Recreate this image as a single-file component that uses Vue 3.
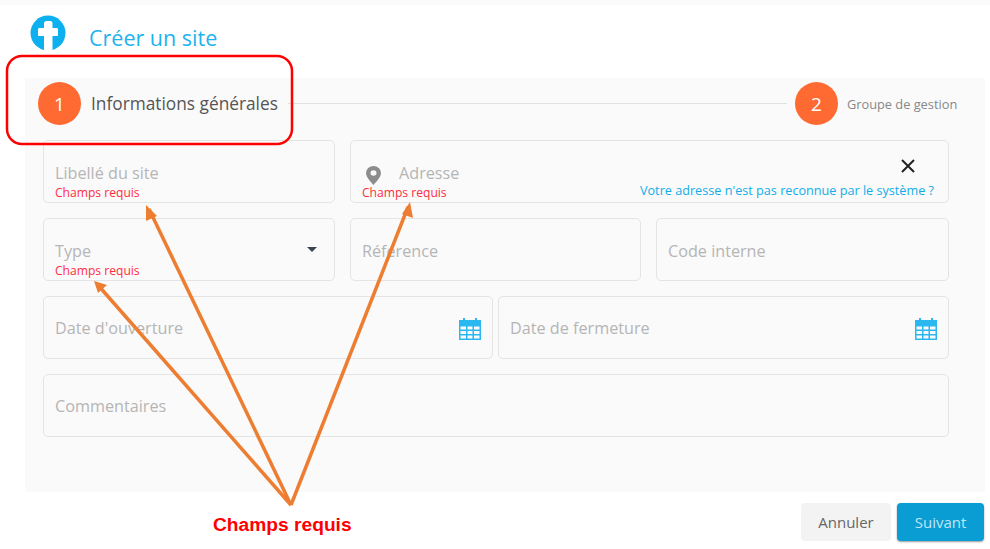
<template>
  <div class="page">
    <div class="top-strip"></div>
    <header class="head">
      <svg class="logo" viewBox="0 0 36 36" width="36" height="36">
        <circle cx="18" cy="18" r="17.500" fill="#0cb0ee" />
        <path d="M14 8.500c0-1.500 1-2.500 2.500-2.500h4c1.500 0 2 1 2 2.500V13h4c1 0 1.500.5 1.500 1.500v5c0 1-.5 1.500-1.500 1.500h-4v15H14V21H9.500c-1 0-1.500-.5-1.500-1.500v-5c0-1 .5-1.500 1.500-1.500H14z" fill="#fff" />
      </svg>
      <h1 class="title">Créer un site</h1>
    </header>

    <section class="panel">
      <div class="stepper">
        <span class="bullet">1</span>
        <span class="step-main">Informations générales</span>
        <span class="step-line"></span>
        <span class="bullet">2</span>
        <span class="step-next">Groupe de gestion</span>
      </div>

      <div class="form">
        <div class="row">
          <div class="field w-292">
            <span class="ph">Libellé du site</span>
            <span class="req">Champs requis</span>
          </div>
          <div class="field grow address">
            <svg class="pin" viewBox="0 0 16 22" width="15" height="19" preserveAspectRatio="none">
              <path fill-rule="evenodd" fill="#8c8c8c" d="M8 0a8 8 0 0 1 8 8c0 5-5 10-8 14C5 18 0 13 0 8a8 8 0 0 1 8-8zm0 5a3.200 3.200 0 1 0 0 6.400A3.200 3.200 0 0 0 8 5z" />
            </svg>
            <span class="ph addr-ph">Adresse</span>
            <span class="req">Champs requis</span>
            <svg class="close" viewBox="0 0 14 14" width="14" height="14">
              <path d="M1 1l12 12M13 1L1 13" stroke="#222" stroke-width="2" fill="none" />
            </svg>
            <a class="addr-link">Votre adresse n'est pas reconnue par le système ?</a>
          </div>
        </div>

        <div class="row">
          <div class="field w-292">
            <span class="ph">Type</span>
            <span class="req">Champs requis</span>
            <span class="caret"></span>
          </div>
          <div class="field w-291"><span class="ph">Référence</span></div>
          <div class="field grow"><span class="ph">Code interne</span></div>
        </div>

        <div class="row tight">
          <div class="field low w-450">
            <span class="ph">Date d'ouverture</span>
            <svg class="cal" viewBox="0 0 24 24" width="24" height="24">
              <use href="#cal-shape" />
            </svg>
          </div>
          <div class="field low grow">
            <span class="ph">Date de fermeture</span>
            <svg class="cal" viewBox="0 0 24 24" width="24" height="24">
              <use href="#cal-shape" />
            </svg>
          </div>
        </div>

        <div class="row">
          <div class="field low grow"><span class="ph">Commentaires</span></div>
        </div>
      </div>
    </section>

    <footer class="actions">
      <button class="btn cancel">Annuler</button>
      <button class="btn next">Suivant</button>
    </footer>

    <!-- annotations drawn on top of the screenshot -->
    <svg class="notes" viewBox="0 0 990 549" width="990" height="549">
      <defs>
        <g id="cal-shape">
          <path fill="#2bb8f0" fill-rule="evenodd" d="M1 3h4V1h2v2h10V1h2v2h4v20H1zM2.500 9.500v3H8v-3zm7 0v3h5v-3zm6.500 0v3h5.500v-3zM2.500 14v3H8v-3zm7 0v3h5v-3zm6.500 0v3h5.500v-3zM2.500 18.500v3H8v-3zm7 0v3h5v-3zm6.500 0v3h5.500v-3z" />
        </g>
      </defs>
      <rect x="7" y="56" width="285" height="88" rx="15" fill="none" stroke="#ff0000" stroke-width="2.500" />
      <g stroke="#ed7d31" stroke-width="3.500" fill="none">
        <path d="M291 505L97 284" />
        <path d="M291 505L149 209" />
        <path d="M291 505L408 207" />
      </g>
      <g fill="#ed7d31">
        <path d="M94 281l13 4-9 8z" />
        <path d="M146 205l11 11-11 5z" />
        <path d="M410 202l3 16-11-4z" />
      </g>
      <text x="213" y="531" class="note-text">Champs requis</text>
    </svg>
  </div>
</template>

<script setup>
</script>

<style>
html,
body {
  margin: 0;
  background: #fff;
}
</style>

<style scoped>
.page {
  position: relative;
  width: 990px;
  height: 549px;
  overflow: hidden;
  font-family: 'Open Sans', 'Noto Sans', sans-serif;
  background: #fff;
}

.top-strip {
  height: 5px;
  background: #fafafa;
}

.head {
  display: flex;
  align-items: center;
  height: 73px;
  padding-left: 30px;
  box-sizing: border-box;
}

.logo {
  margin-top: -18px;
}

.title {
  margin: -8px 0 0 23px;
  font-size: 21.500px;
  font-weight: 400;
  color: #1db3ee;
}

.panel {
  margin-left: 25px;
  width: 960px;
  height: 414px;
  background: #fafafa;
  box-sizing: border-box;
  padding-left: 13px;
}

.stepper {
  display: flex;
  align-items: center;
  height: 62px;
  padding-bottom: 11px;
  box-sizing: border-box;
}

.bullet {
  display: flex;
  align-items: center;
  justify-content: center;
  width: 43px;
  height: 43px;
  border-radius: 50%;
  background: #ff6a33;
  color: #fff;
  font-size: 19px;
  flex: none;
}

.step-main {
  margin-left: 10px;
  font-size: 17.300px;
  color: #555;
}

.step-line {
  width: 499px;
  height: 1px;
  margin: 0 8px 0 10px;
  background: #e2e2e2;
}

.step-next {
  margin-left: 9px;
  font-size: 12.800px;
  color: #888;
}

.form {
  display: flex;
  flex-direction: column;
  gap: 15px;
  width: 906px;
  margin-left: 5px;
}

.row {
  display: flex;
  gap: 15px;
}

.row.tight {
  gap: 5px;
}

.field {
  position: relative;
  height: 63px;
  box-sizing: border-box;
  border: 1px solid #e4e4e4;
  border-radius: 5px;
  padding: 21px 11px 0;
}

.field.low {
  padding-top: 20px;
}

.w-292 {
  width: 292px;
  flex: none;
}

.w-291 {
  width: 291px;
  flex: none;
}

.w-450 {
  width: 450px;
  flex: none;
}

.grow {
  flex: 1;
}

.ph {
  display: block;
  font-size: 16.200px;
  line-height: 22px;
  color: #b5b5b5;
}

.req {
  display: block;
  font-size: 12.100px;
  line-height: 14px;
  color: #ff2d3d;
  margin-top: 2px;
}

.addr-ph {
  margin-left: 37px;
}

.pin {
  position: absolute;
  left: 15px;
  top: 25px;
}

.close {
  position: absolute;
  right: 33px;
  top: 18px;
}

.addr-link {
  position: absolute;
  right: 14px;
  top: 41px;
  font-size: 12.650px;
  line-height: 16px;
  color: #12ade8;
}

.caret {
  position: absolute;
  right: 17px;
  top: 28px;
  border-left: 5px solid transparent;
  border-right: 5px solid transparent;
  border-top: 5px solid #3a4450;
}

.cal {
  position: absolute;
  right: 10px;
  top: 20px;
}

.actions {
  display: flex;
  justify-content: flex-end;
  gap: 6px;
  padding: 11px 6px 0 0;
}

.btn {
  height: 38px;
  border: 0;
  border-radius: 4px;
  font-family: inherit;
  font-size: 15px;
}

.cancel {
  width: 90px;
  background: #f3f3f3;
  color: #666;
}

.next {
  width: 87px;
  background: #0a9dd3;
  color: #bfe6f5;
  box-shadow: 0 1px 2px rgba(0, 0, 0, 0.4);
}

.notes {
  position: absolute;
  left: 0;
  top: 0;
  pointer-events: none;
}

.note-text {
  font-family: 'Liberation Sans', Arial, sans-serif;
  font-size: 19.200px;
  font-weight: 700;
  fill: #ff0000;
}
</style>
